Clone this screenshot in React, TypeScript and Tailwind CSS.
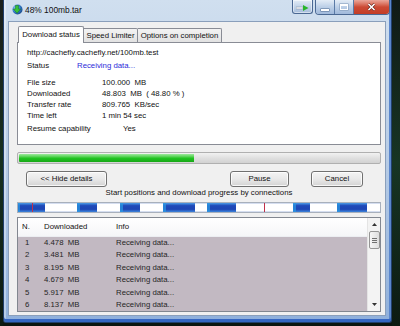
import React from "react";

const rows: [string, string][] = [
  ["1", "4.478"],
  ["2", "3.481"],
  ["3", "8.195"],
  ["4", "4.679"],
  ["5", "5.917"],
  ["6", "8.137"],
];

const segs: [number, number][] = [
  [17, 45],
  [77, 97],
  [120, 140],
  [163, 195],
  [207, 236],
  [293, 310],
  [337, 367],
];

function AppIcon() {
  return (
    <svg width="11" height="11" viewBox="0 0 11 11">
      <defs>
        <radialGradient id="gl" cx="0.35" cy="0.35" r="0.7">
          <stop offset="0" stopColor="#9fd4ff" />
          <stop offset="0.6" stopColor="#2f78c8" />
          <stop offset="1" stopColor="#1a4a8a" />
        </radialGradient>
      </defs>
      <circle cx="5.5" cy="5.5" r="5" fill="url(#gl)" />
      <path d="M3.5 1.5h3v3.5h2.2L5 9.2 1.3 5h2.2z" fill="#36c23a" stroke="#14731a" strokeWidth="0.5" />
    </svg>
  );
}

export default function App() {
  return (
    <div className="w-[400px] h-[326px] bg-[#0c1510] overflow-hidden flex font-['Liberation_Sans',Arial,sans-serif] text-[7.8px] text-[#111]">
      <div className="w-[3px] h-full bg-gradient-to-b from-[#1a1f1c] via-[#163020] to-[#0d1a12]" />
      <div className="w-[389px] h-[323px] flex flex-col bg-gradient-to-b from-[#d0dfef] via-[#b7cce6] to-[#8fb0dc] border-x border-b border-[#213f6c] rounded-b-[3px] shadow-[inset_0_-3px_0_#3566c2,inset_2px_0_0_rgba(255,255,255,0.35),inset_-2px_0_0_#5a86cc]">
        {/* title bar */}
        <div className="h-[21px] flex items-start shrink-0">
          <div className="mt-[4px] ml-[8px] w-[11px] h-[11px]">
            <AppIcon />
          </div>
          <span className="ml-[2px] mt-[5px] text-[8.4px] leading-[10px] text-[#111]">48% 100mb.tar</span>
          <div className="ml-auto mr-[1px] flex items-start">
            <div className="w-[21px] h-[14px] border border-t-0 border-[#4a6893] rounded-b-[3px] bg-gradient-to-b from-[#e3ecf6] via-[#c2d3e8] to-[#a5bddc] flex items-end justify-center pb-[2px] shadow-[inset_0_0_0_1px_rgba(255,255,255,0.5)]">
              <svg width="13" height="6" viewBox="0 0 13 6">
                <rect x="0" y="2" width="7" height="2" fill="#f4f4f4" stroke="#6d7f99" strokeWidth="0.4" />
                <path d="M7 0L12.5 3L7 6z" fill="#27b52a" />
              </svg>
            </div>
            <div className="ml-[2px] flex border border-t-0 border-[#4a6893] rounded-b-[4px] overflow-hidden">
              <div className="w-[19px] h-[14px] bg-gradient-to-b from-[#e3ecf6] via-[#bccfe7] to-[#a0b9db] flex items-end justify-center pb-[3px] border-r border-[#5a7aa6]">
                <div className="w-[8px] h-[2px] bg-white shadow-[0_0_0_0.5px_#4f6b90]" />
              </div>
              <div className="w-[19px] h-[14px] bg-gradient-to-b from-[#e3ecf6] via-[#bccfe7] to-[#a0b9db] flex items-center justify-center border-r border-[#5a7aa6]">
                <div className="w-[8px] h-[6px] border border-white border-t-2 shadow-[0_0_0_0.5px_#7b93b3]" />
              </div>
              <div className="w-[35px] h-[14px] bg-gradient-to-b from-[#e9a79b] via-[#cc4a34] to-[#c23d27] flex items-center justify-center">
                <svg width="9" height="8" viewBox="0 0 9 8">
                  <path d="M1.5 1L7.5 7M7.5 1L1.5 7" stroke="#5a1a12" strokeWidth="2.6" />
                  <path d="M1.5 1L7.5 7M7.5 1L1.5 7" stroke="#ffffff" strokeWidth="1.7" />
                </svg>
              </div>
            </div>
          </div>
        </div>

        {/* client area */}
        <div className="ml-[4px] mr-[5px] h-[295px] bg-[#f0f0f0] border border-[#8a9fbb] flex flex-col pl-[8px] pr-[4px] pt-[4px]">
          {/* tabs */}
          <div className="h-[16px] flex items-end shrink-0">
            <div className="ml-[1px] w-[66px] h-[17px] -mb-px relative z-10 bg-white border border-b-0 border-[#898c95] rounded-t-[2px] flex items-center justify-center">
              Download status
            </div>
            <div className="w-[54px] h-[14px] border border-l-0 border-b-0 border-[#898c95] rounded-tr-[2px] bg-gradient-to-b from-[#f3f3f3] to-[#e2e2e2] flex items-center justify-center">
              Speed Limiter
            </div>
            <div className="w-[84px] h-[14px] border border-l-0 border-b-0 border-[#898c95] rounded-tr-[2px] bg-gradient-to-b from-[#f3f3f3] to-[#e2e2e2] flex items-center justify-center">
              Options on completion
            </div>
          </div>

          {/* panel */}
          <div className="h-[103px] shrink-0 border border-[#898c95] bg-white pl-[9px] pt-[4px] flex flex-col">
            <div className="h-[11px] leading-[11px]">http://cachefly.cachefly.net/100mb.test</div>
            <div className="h-[11px] leading-[11px] mt-[2px] flex">
              <span className="w-[50px]">Status</span>
              <span className="text-[#2b2bd9]">Receiving data...</span>
            </div>
            <div className="mt-[5.5px] flex flex-col">
              {[
                ["File size", "100.000  MB"],
                ["Downloaded", "48.803  MB  ( 48.80 % )"],
                ["Transfer rate", "809.765  KB/sec"],
                ["Time left", "1 min 54 sec"],
              ].map(([l, v]) => (
                <div key={l} className="h-[11.3px] leading-[11.3px] flex">
                  <span className="w-[75px]">{l}</span>
                  <span className="whitespace-pre">{v}</span>
                </div>
              ))}
              <div className="h-[11.3px] leading-[11.3px] mt-[1.5px] flex">
                <span className="w-[75px]">Resume capability</span>
                <span className="ml-[21px]">Yes</span>
              </div>
            </div>
          </div>

          {/* progress */}
          <div className="mt-[7px] h-[12px] shrink-0 border border-[#b0b0b0] rounded-[2px] bg-gradient-to-b from-[#f2f2f2] via-[#e0e0e0] to-[#d2d2d2] flex p-px">
            <div
              className="h-full rounded-l-[1px] bg-gradient-to-b from-[#9bea9b] via-[#22c522] to-[#16a716]"
              style={{ width: "48.6%" }}
            />
          </div>

          {/* buttons */}
          <div className="mt-[7px] h-[16px] shrink-0 flex">
            <div className="ml-[9px] w-[81px] h-full border border-[#707070] rounded-[3px] bg-gradient-to-b from-[#f4f4f4] via-[#e9e9e9] to-[#d3d3d3] shadow-[inset_0_0_0_1px_rgba(255,255,255,0.8)] flex items-center justify-center">
              &lt;&lt; Hide details
            </div>
            <div className="ml-[123px] w-[59px] h-full border border-[#707070] rounded-[3px] bg-gradient-to-b from-[#f4f4f4] via-[#e9e9e9] to-[#d3d3d3] shadow-[inset_0_0_0_1px_rgba(255,255,255,0.8)] flex items-center justify-center">
              Pause
            </div>
            <div className="ml-[22px] w-[52px] h-full border border-[#707070] rounded-[3px] bg-gradient-to-b from-[#f4f4f4] via-[#e9e9e9] to-[#d3d3d3] shadow-[inset_0_0_0_1px_rgba(255,255,255,0.8)] flex items-center justify-center">
              Cancel
            </div>
          </div>

          <div className="h-[12px] leading-[12px] shrink-0 text-center">
            Start positions and download progress by connections
          </div>

          {/* connections bar */}
          <div className="mt-[3px] h-[11px] shrink-0 border border-[#a8b0bc] bg-white">
            <svg width="362" height="9" viewBox="0 0 362 9" className="block">
              <defs>
                <linearGradient id="sg" x1="0" y1="0" x2="0" y2="1">
                  <stop offset="0" stopColor="#4c9be6" />
                  <stop offset="0.3" stopColor="#2049b8" />
                  <stop offset="0.7" stopColor="#1e46b4" />
                  <stop offset="1" stopColor="#3e86dc" />
                </linearGradient>
              </defs>
              <rect x="0" y="0" width="362" height="1" fill="#d5def0" />
              <rect x="0" y="8" width="362" height="1" fill="#d5def0" />
              {segs.map(([a, b]) => (
                <g key={a}>
                  <rect x={a - 18} y="0" width={b - a} height="9" fill="url(#sg)" />
                  <rect x={a - 18} y="0" width="3" height="9" fill="#2a9ae4" opacity="0.7" />
                </g>
              ))}
              <rect x={32 - 18} y="0" width="1" height="9" fill="#c0304a" />
              <rect x={264 - 18} y="0" width="1" height="9" fill="#c0304a" />
            </svg>
          </div>

          {/* list */}
          <div className="mt-[4px] h-[95px] shrink-0 border border-[#828790] bg-white flex">
            <div className="flex-1 flex flex-col">
              <div className="h-[19px] shrink-0 flex items-center bg-gradient-to-b from-white to-[#f5f6f8] border-b border-[#eceef2]">
                <span className="w-[26px] pl-[4px]">N.</span>
                <span className="w-[72px]">Downloaded</span>
                <span>Info</span>
              </div>
              <div className="flex flex-col bg-[#c2b9c2]">
                {rows.map(([n, v]) => (
                  <div key={n} className="h-[12.4px] leading-[12.4px] flex text-[#262626]">
                    <span className="w-[26px] pl-[7px]">{n}</span>
                    <span className="w-[72px] whitespace-pre">{v}  MB</span>
                    <span>Receiving data...</span>
                  </div>
                ))}
              </div>
            </div>
            <div className="w-[13px] bg-[#f3f3f3] border-l border-[#e4e4e4] flex flex-col items-center">
              <div className="h-[13px] flex items-center justify-center">
                <svg width="5" height="3" viewBox="0 0 5 3">
                  <path d="M0 3L2.5 0L5 3z" fill="#333" />
                </svg>
              </div>
              <div className="w-[11px] h-[18px] border border-[#959595] rounded-[2px] bg-gradient-to-r from-[#f6f6f6] to-[#dedede] flex flex-col items-center justify-center gap-[1px]">
                <div className="w-[5px] h-px bg-[#707070]" />
                <div className="w-[5px] h-px bg-[#707070]" />
                <div className="w-[5px] h-px bg-[#707070]" />
              </div>
              <div className="flex-1" />
              <div className="h-[13px] flex items-center justify-center">
                <svg width="5" height="3" viewBox="0 0 5 3">
                  <path d="M0 0L2.5 3L5 0z" fill="#333" />
                </svg>
              </div>
            </div>
          </div>
        </div>
      </div>
      <div className="flex-1 h-full bg-gradient-to-b from-[#101a16] via-[#173524] to-[#0c1a12]" />
    </div>
  );
}
